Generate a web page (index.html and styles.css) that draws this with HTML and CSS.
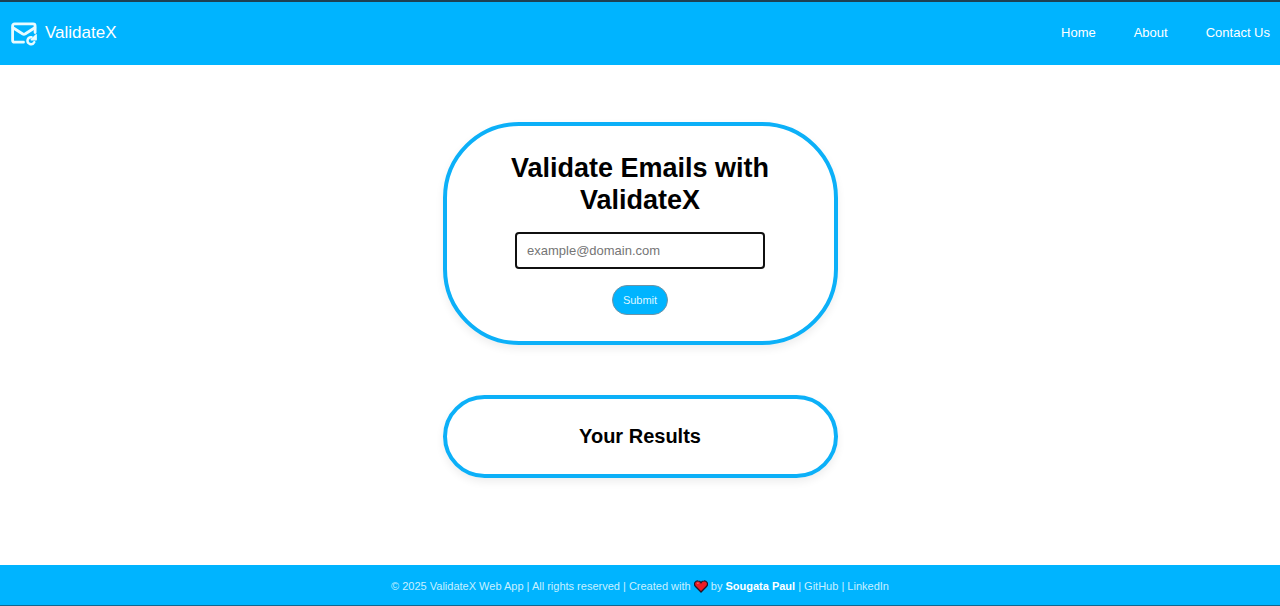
FILE: index.html
```html
<!DOCTYPE html>
<html lang="en">
<head>
<meta charset="utf-8">
<meta name="viewport" content="width=device-width, initial-scale=1">
<title>ValidateX</title>
<link rel="stylesheet" href="styles.css">
</head>
<body>
<header class="navbar">
  <div class="brand">
    <svg class="brand-icon" viewBox="0 0 28 26" fill="none" stroke="#e8fbff" stroke-width="2.800" stroke-linecap="round" stroke-linejoin="round" aria-hidden="true">
      <path d="M13.500 22.200H4.600a2 2 0 0 1-2-2V5.800a2 2 0 0 1 2-2h18.500a2 2 0 0 1 2 2v6.700"/>
      <path d="M3 7.800 12.400 13.800a3 3 0 0 0 3 0L24.800 7.800"/>
      <path d="M21.500 17.200a3.500 3.500 0 1 0 2.700 5" stroke-width="2.500"/>
      <path d="M26.200 14.800v5h-5z" fill="#e8fbff" stroke-width="1.300"/>
    </svg>
    <span class="brand-name">ValidateX</span>
  </div>
  <nav class="nav-links">
    <a href="#home">Home</a>
    <a href="#about">About</a>
    <a href="#contact">Contact Us</a>
  </nav>
</header>
<main class="content">
  <form class="card card-form">
    <h1>Validate Emails with ValidateX</h1>
    <input class="email" type="email" placeholder="example@domain.com" aria-label="Email address">
    <button class="submit" type="button">Submit</button>
  </form>
  <section class="card card-results">
    <h2>Your Results</h2>
  </section>
</main>
<footer class="footer">
  <p>© 2025 ValidateX Web App | All rights reserved | Created with
    <svg class="heart" viewBox="0 0 14 13" role="img" aria-label="love"><path d="M7 12 1.300 6.200C-.8 3.500 1.500.8 4 .9 5.500.9 6.500 1.800 7 2.700 7.500 1.800 8.500.9 10 .9c2.500-.1 4.800 2.600 2.700 5.300z" fill="#ed1c24" stroke="#251525" stroke-width="1.300"/><path d="M3.300 3.200h1.200" stroke="#ff9ba0" stroke-width="1"/></svg>
    by <strong>Sougata Paul</strong> | <a href="#github">GitHub</a> | <a href="#linkedin">LinkedIn</a></p>
</footer>
</body>
</html>
```
FILE: styles.css
```css
* {
  box-sizing: border-box;
}

body {
  margin: 0;
  min-height: 100vh;
  display: flex;
  flex-direction: column;
  background: #fff;
  color: #000;
  font-family: Arial, "Liberation Sans", sans-serif;
}

a {
  color: inherit;
  text-decoration: none;
}

.navbar {
  display: flex;
  align-items: center;
  justify-content: space-between;
  height: 65px;
  padding: 0 10px 2px;
  border-top: 2px solid #1d4054;
  background: #00b4ff;
  color: #fff;
}

.brand {
  display: flex;
  align-items: center;
  gap: 7px;
}

.brand-icon {
  width: 28px;
  height: 26px;
}

.brand-name {
  font-size: 17px;
}

.nav-links {
  display: flex;
  gap: 38px;
  font-size: 13px;
}

.content {
  flex: 1;
  display: flex;
  flex-direction: column;
  align-items: center;
  gap: 50px;
  padding: 57px 20px 40px;
}

.card {
  width: 100%;
  max-width: 395px;
  border: 4px solid #0cb0f8;
  text-align: center;
  box-shadow: 0 4px 8px rgba(0, 0, 0, 0.07);
}

.card-form {
  display: flex;
  flex-direction: column;
  align-items: center;
  padding: 26px 50px;
  border-radius: 76px;
}

.card-results {
  padding: 24px;
  border-radius: 42px;
}

h1 {
  margin: 0 0 16px;
  font-size: 27px;
  line-height: 32px;
}

h2 {
  margin: 0;
  font-size: 20px;
  line-height: 27px;
}

.email {
  width: 100%;
  max-width: 250px;
  height: 37px;
  padding: 0 10px;
  border: 2px solid #101010;
  border-radius: 4px;
  background: #fff;
  font-family: inherit;
  font-size: 13px;
}

.email::placeholder {
  color: #757575;
}

.submit {
  height: 30px;
  margin-top: 16px;
  padding: 0 10px;
  border: 1px solid #6f93a6;
  border-radius: 15px;
  background: #00b4ff;
  color: #dff6ff;
  font-family: inherit;
  font-size: 11px;
}

.footer {
  padding: 14px 20px 12px;
  border-bottom: 1px solid #12678f;
  background: #00b4ff;
  color: #c8f0ff;
  font-size: 11px;
  line-height: 14px;
  text-align: center;
}

.footer p {
  margin: 0;
}

.footer strong {
  color: #fff;
}

.heart {
  width: 14px;
  height: 13px;
  vertical-align: -3px;
}
```
